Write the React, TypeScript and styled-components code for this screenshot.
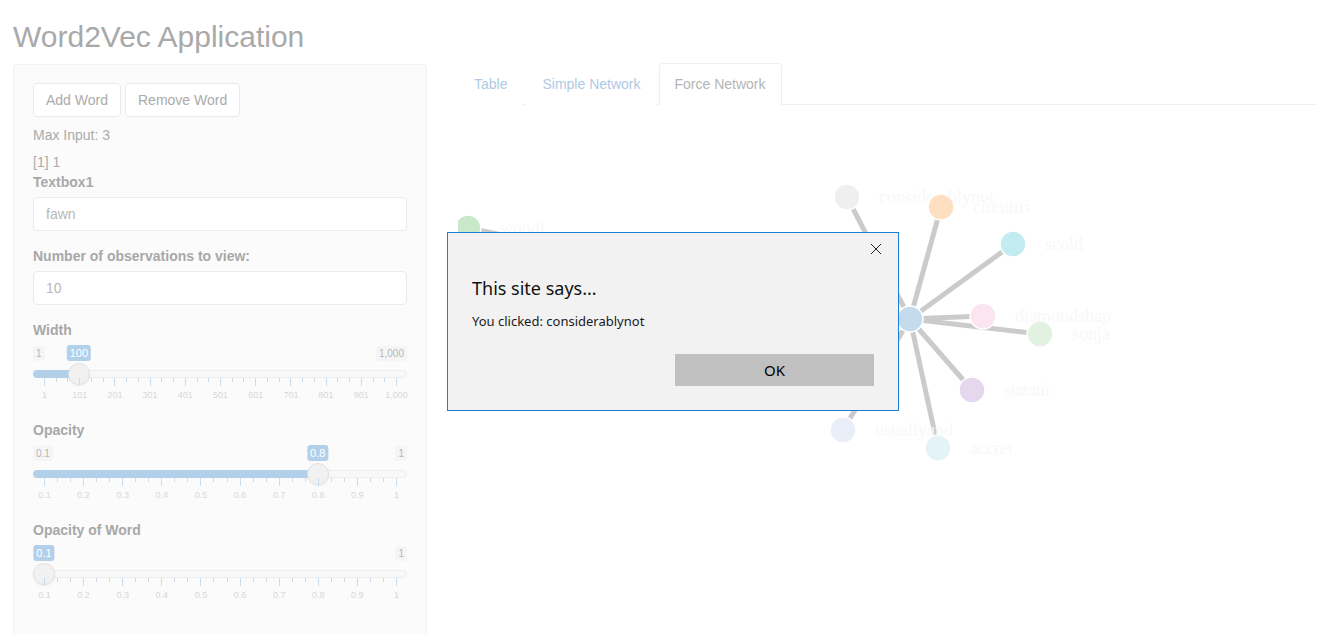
import React from "react";
import styled, { createGlobalStyle } from "styled-components";

const GlobalStyle = createGlobalStyle`
  html, body { margin: 0; padding: 0; background: #fff; }
  body {
    font-family: "Liberation Sans", Arial, sans-serif;
    font-size: 14px;
    line-height: 1.42857;
    color: #aaa;
  }
  * { box-sizing: border-box; }
`;

const Page = styled.div`
  padding: 0 15px 0 13px;
`;

const Title = styled.h2`
  margin: 20px 0 11px;
  font-size: 30px;
  font-weight: 400;
  line-height: 33px;
  color: #a9a9a9;
`;

const Layout = styled.div`
  display: grid;
  grid-template-columns: 414px 1fr;
  column-gap: 31px;
  align-items: start;
`;

const Well = styled.div`
  display: flex;
  flex-direction: column;
  background: #fbfbfb;
  border: 1px solid #f2f2f2;
  border-radius: 4px;
  padding: 18px 19px 19px;
`;

const ButtonRow = styled.div`
  display: flex;
  gap: 4px;
  margin-bottom: 9px;
`;

const Button = styled.button`
  height: 34px;
  padding: 6px 12px;
  font-family: inherit;
  font-size: 14px;
  line-height: 20px;
  color: #ababab;
  background: #fff;
  border: 1px solid #eaeaea;
  border-radius: 4px;
`;

const OutputText = styled.div<{ $gap?: number }>`
  margin-bottom: ${(p) => p.$gap ?? 0}px;
  color: #ababab;
`;

const FormGroup = styled.div`
  display: flex;
  flex-direction: column;
  margin-bottom: 16px;
`;

const Label = styled.label`
  display: block;
  margin-bottom: 4px;
  font-weight: 700;
  color: #a8a8a8;
`;

const TextInput = styled.input`
  display: block;
  width: 100%;
  height: 34px;
  padding: 6px 12px;
  font-family: inherit;
  font-size: 14px;
  color: #b8b8b8;
  background: #fff;
  border: 1px solid #ebebeb;
  border-radius: 4px;
  outline: none;
  &::placeholder { color: #b8b8b8; opacity: 1; }
`;

/* ---------- slider ---------- */

const SliderBox = styled.div`
  display: flex;
  flex-direction: column;
  height: 60px;
`;

const LabelRow = styled.div`
  position: relative;
  display: flex;
  justify-content: space-between;
  align-items: flex-start;
  height: 16px;
  padding-top: 1px;
`;

const MinMax = styled.span<{ $hidden?: boolean }>`
  visibility: ${(p) => (p.$hidden ? "hidden" : "visible")};
  font-size: 10px;
  line-height: 13px;
  padding: 1px 3px;
  background: #f5f5f5;
  color: #b5b5b5;
  border-radius: 3px;
`;

const ValueBubble = styled.span`
  position: absolute;
  top: 0;
  transform: translateX(-50%);
  font-size: 11px;
  line-height: 14px;
  padding: 1px 3px;
  background: #b2d0ea;
  color: #fff;
  border-radius: 3px;
  white-space: nowrap;
`;

const Track = styled.div`
  position: relative;
  margin-top: 9px;
  height: 8px;
  background: #f8f8f8;
  border: 1px solid #ededed;
  border-radius: 16px;
`;

const Bar = styled.div`
  position: absolute;
  top: -1px;
  left: -1px;
  height: 8px;
  background: #b2d0ea;
  border-radius: 16px 0 0 16px;
`;

const Handle = styled.div`
  position: absolute;
  top: -8px;
  width: 22px;
  height: 22px;
  margin-left: -12px;
  border-radius: 50%;
  background: #f1f1f1;
  border: 1px solid #e3e3e3;
  box-shadow: 0 1px 2px rgba(0, 0, 0, 0.06);
`;

const Grid = styled.div`
  position: relative;
  margin: 0 11px;
  height: 24px;
`;

const Tick = styled.span<{ $major: boolean }>`
  position: absolute;
  top: 0;
  width: 1px;
  height: ${(p) => (p.$major ? 8 : 4)}px;
  background: #cadcee;
`;

const TickLabel = styled.span`
  position: absolute;
  top: 12px;
  transform: translateX(-50%);
  font-size: 9px;
  line-height: 11px;
  color: #d8d8d8;
  white-space: nowrap;
`;

type SliderProps = {
  minLabel: string;
  maxLabel: string;
  valueLabel: string;
  fraction: number;
  gridLabels: string[];
};

const TRACK_W = 374;
const PAD = 11;

function Slider({ minLabel, maxLabel, valueLabel, fraction, gridLabels }: SliderProps) {
  const inner = TRACK_W - PAD * 2;
  const handleX = PAD + fraction * inner;
  const hideMin = handleX - 20 < 14;
  const intervals = gridLabels.length - 1;
  const ticks: { pos: number; major: boolean }[] = [];
  for (let i = 0; i <= intervals; i++) {
    ticks.push({ pos: i / intervals, major: true });
    if (i < intervals) {
      ticks.push({ pos: (i + 1 / 3) / intervals, major: false });
      ticks.push({ pos: (i + 2 / 3) / intervals, major: false });
    }
  }
  return (
    <SliderBox>
      <LabelRow>
        <MinMax $hidden={hideMin}>{minLabel}</MinMax>
        <MinMax>{maxLabel}</MinMax>
        <ValueBubble style={{ left: handleX }}>{valueLabel}</ValueBubble>
      </LabelRow>
      <Track>
        <Bar style={{ width: handleX + 1 }} />
        <Handle style={{ left: handleX }} />
      </Track>
      <Grid>
        {ticks.map((t, i) => (
          <Tick key={i} $major={t.major} style={{ left: t.pos * inner }} />
        ))}
        {gridLabels.map((l, i) => (
          <TickLabel key={l + i} style={{ left: (i / intervals) * inner + 0.5 }}>
            {l}
          </TickLabel>
        ))}
      </Grid>
    </SliderBox>
  );
}

/* ---------- main panel ---------- */

const Main = styled.div`
  display: flex;
  flex-direction: column;
  margin-top: -1px;
`;

const TabList = styled.ul`
  display: flex;
  margin: 0;
  padding: 0;
  list-style: none;
  border-bottom: 1px solid #f0f0f0;
`;

const Tab = styled.li<{ $active?: boolean; $gap?: number }>`
  margin-right: ${(p) => p.$gap ?? 2}px;
  margin-bottom: -1px;
  padding: 10px 15px;
  line-height: 20px;
  border: 1px solid ${(p) => (p.$active ? "#efefef" : "transparent")};
  border-bottom-color: transparent;
  border-radius: 4px 4px 0 0;
  background: #fff;
  color: ${(p) => (p.$active ? "#b5b5b5" : "#aecae5")};
`;

const NetworkSvg = styled.svg`
  display: block;
  width: 858px;
  height: 505px;
`;

type NodeT = { id: string; x: number; y: number; fill: string; label?: boolean };

const center: NodeT = { id: "fawn", x: 452, y: 214, fill: "#c4dbee", label: false };
const nodes: NodeT[] = [
  { id: "woodi", x: 10, y: 123, fill: "#c9e7ca" },
  { id: "considerablynot", x: 389, y: 92, fill: "#efefef" },
  { id: "circuitri", x: 483, y: 102, fill: "#ffdfc2" },
  { id: "scold", x: 555, y: 139, fill: "#c3ecf2" },
  { id: "sonja", x: 582, y: 229, fill: "#e1f3e0" },
  { id: "diamondshap", x: 525, y: 211, fill: "#fbe6ef" },
  { id: "suzani", x: 514, y: 285, fill: "#e4d7ee" },
  { id: "accret", x: 480, y: 343, fill: "#e3f3f7" },
  { id: "usuallyand", x: 385, y: 325, fill: "#e8eff8" },
];

function Network() {
  const all = [...nodes, center];
  return (
    <NetworkSvg viewBox="0 0 858 505">
      {nodes.map((n) => (
        <line
          key={"l" + n.id}
          x1={center.x}
          y1={center.y}
          x2={n.x}
          y2={n.y}
          stroke="#cbcbcb"
          strokeWidth={5}
        />
      ))}
      {all.map((n) => (
        <g key={n.id}>
          <circle cx={n.x} cy={n.y} r={13} fill={n.fill} stroke="#fff" strokeWidth={1.5} />
          {n.label !== false && (
            <text
              x={n.x + 32}
              y={n.y + 6}
              fill="#f8f8f8"
              fontFamily='"Liberation Serif", serif'
              fontSize={18}
            >
              {n.id}
            </text>
          )}
        </g>
      ))}
    </NetworkSvg>
  );
}

/* ---------- alert dialog ---------- */

const DialogBox = styled.div`
  position: fixed;
  left: 447px;
  top: 232px;
  width: 452px;
  height: 179px;
  display: flex;
  flex-direction: column;
  padding: 0 24px;
  background: #f2f2f2;
  border: 1px solid #1b7fd6;
  font-family: "Noto Sans", "Open Sans", sans-serif;
  color: #000;
`;

const DialogHeader = styled.div`
  display: flex;
  justify-content: flex-end;
  padding-top: 9px;
  margin-right: -9px;
`;

const CloseButton = styled.button`
  width: 14px;
  height: 14px;
  padding: 0;
  border: none;
  background: transparent;
  display: flex;
  align-items: center;
  justify-content: center;
`;

const DialogTitle = styled.div`
  margin-top: 20px;
  font-size: 18px;
  line-height: 24px;
  color: #111;
`;

const DialogMessage = styled.div`
  margin-top: 12px;
  font-size: 13px;
  line-height: 18px;
  color: #1a1a1a;
`;

const DialogFooter = styled.div`
  display: flex;
  justify-content: flex-end;
  margin-top: 24px;
`;

const OkButton = styled.button`
  width: 199px;
  height: 32px;
  border: none;
  background: #c0c0c0;
  font-family: inherit;
  font-size: 15px;
  color: #000;
`;

export default function App() {
  const gridDec = ["0.1", "0.2", "0.3", "0.4", "0.5", "0.6", "0.7", "0.8", "0.9", "1"];
  const widthGrid = ["1", "101", "201", "301", "401", "501", "601", "701", "801", "901", "1,000"];
  return (
    <>
      <GlobalStyle />
      <Page>
        <Title>Word2Vec Application</Title>
        <Layout>
          <Well>
            <ButtonRow>
              <Button>Add Word</Button>
              <Button>Remove Word</Button>
            </ButtonRow>
            <OutputText $gap={7}>Max Input: 3</OutputText>
            <OutputText>[1] 1</OutputText>
            <FormGroup>
              <Label>Textbox1</Label>
              <TextInput placeholder="fawn" readOnly />
            </FormGroup>
            <FormGroup>
              <Label>Number of observations to view:</Label>
              <TextInput defaultValue="10" readOnly />
            </FormGroup>
            <FormGroup>
              <Label>Width</Label>
              <Slider
                minLabel="1"
                maxLabel="1,000"
                valueLabel="100"
                fraction={99 / 999}
                gridLabels={widthGrid}
              />
            </FormGroup>
            <FormGroup>
              <Label>Opacity</Label>
              <Slider
                minLabel="0.1"
                maxLabel="1"
                valueLabel="0.8"
                fraction={0.7 / 0.9}
                gridLabels={gridDec}
              />
            </FormGroup>
            <FormGroup>
              <Label>Opacity of Word</Label>
              <Slider minLabel="0.1" maxLabel="1" valueLabel="0.1" fraction={0} gridLabels={gridDec} />
            </FormGroup>
          </Well>
          <Main>
            <TabList>
              <Tab $gap={3}>Table</Tab>
              <Tab>Simple Network</Tab>
              <Tab $active>Force Network</Tab>
            </TabList>
            <Network />
          </Main>
        </Layout>
      </Page>
      <DialogBox role="alertdialog">
        <DialogHeader>
          <CloseButton aria-label="Close">
            <svg width="12" height="12" viewBox="0 0 12 12">
              <path d="M1 1 L11 11 M11 1 L1 11" stroke="#222" strokeWidth="1" fill="none" />
            </svg>
          </CloseButton>
        </DialogHeader>
        <DialogTitle>This site says...</DialogTitle>
        <DialogMessage>You clicked: considerablynot</DialogMessage>
        <DialogFooter>
          <OkButton>OK</OkButton>
        </DialogFooter>
      </DialogBox>
    </>
  );
}
